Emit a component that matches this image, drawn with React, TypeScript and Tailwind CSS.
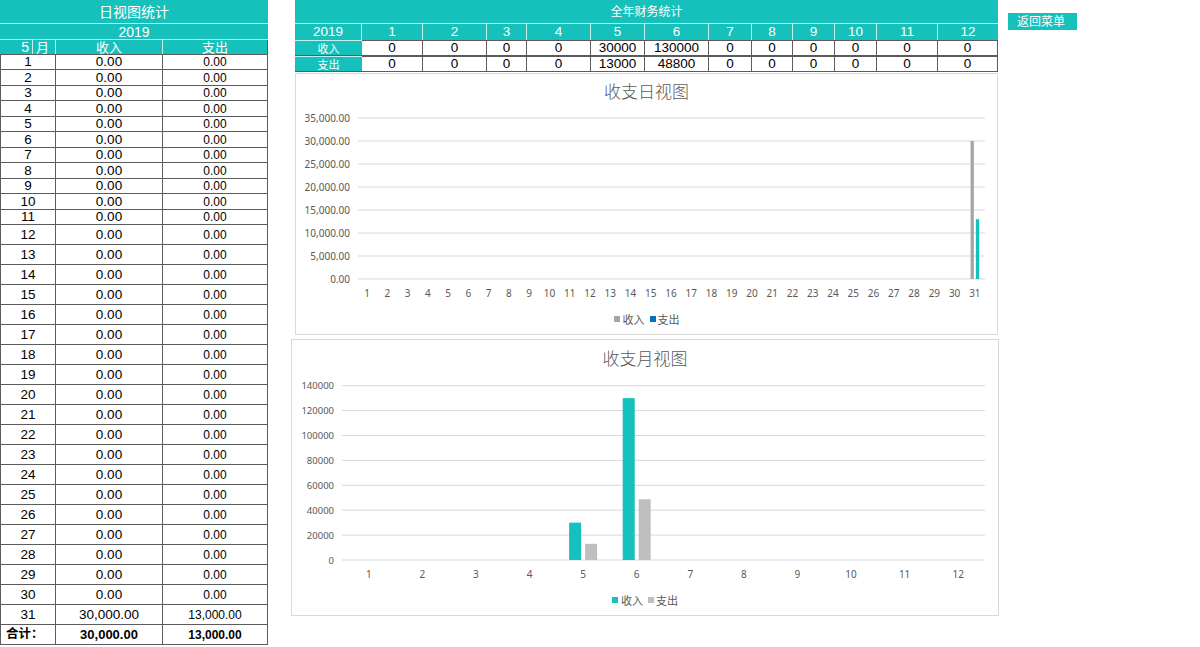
import React from "react";

const TEAL = "#17c1bb";
const NUM = "font-['Liberation_Sans','Noto_Sans_CJK_SC',sans-serif]";

function LeftTable() {
  const days = Array.from({ length: 31 }, (_, i) => i + 1);
  const cell = "flex items-center justify-center leading-none border-r border-[#5c5c5c]";
  return (
    <div className="w-[268px] shrink-0 text-black">
      <div className="h-[24px] bg-[#17c1bb] border-b border-[#c4efed] text-white text-[14px] leading-none flex items-center justify-center">
        日视图统计
      </div>
      <div className={`h-[16px] bg-[#17c1bb] border-b border-[#c4efed] text-white text-[14px] leading-none flex items-center justify-center ${NUM}`}>
        2019
      </div>
      <div className="h-[15px] bg-[#17c1bb] border-b border-[#5c5c5c] text-white text-[13px] leading-none grid grid-cols-[33px_23px_107px_105px]">
        <div className={`flex items-center justify-end pr-[3px] border-r border-[#c4efed] ${NUM} text-[14px]`}>5</div>
        <div className="flex items-center justify-start pl-[3px] border-r border-[#c4efed]">月</div>
        <div className="flex items-center justify-center border-r border-[#c4efed]">收入</div>
        <div className="flex items-center justify-center border-r border-[#5c5c5c]">支出</div>
      </div>
      <div className={NUM}>
        {days.map((d, i) => {
          const small = d <= 11;
          const h = small ? (i % 2 === 0 ? "h-[15px]" : "h-[16px]") : "h-[20px]";
          const inc = d === 31 ? "30,000.00" : "0.00";
          const exp = d === 31 ? "13,000.00" : "0.00";
          return (
            <div key={d} className={`${h} grid grid-cols-[55px_107px_105px] border-l border-b border-[#5c5c5c]`}>
              <div className={`${cell} text-[13.5px]`}>{d}</div>
              <div className={`${cell} text-[13.5px]`}>{inc}</div>
              <div className={`${cell} text-[12px]`}>{exp}</div>
            </div>
          );
        })}
        <div className="h-[20px] grid grid-cols-[55px_107px_105px] border-l border-b border-[#5c5c5c] font-bold">
          <div className="flex items-center justify-start leading-none pl-[5px] text-[12.5px] border-r border-[#5c5c5c]">合计：</div>
          <div className={`${cell} text-[13px]`}>30,000.00</div>
          <div className={`${cell} text-[12px]`}>13,000.00</div>
        </div>
      </div>
    </div>
  );
}

function TopTable() {
  const inc = [0, 0, 0, 0, 30000, 130000, 0, 0, 0, 0, 0, 0];
  const exp = [0, 0, 0, 0, 13000, 48800, 0, 0, 0, 0, 0, 0];
  const grid =
    "grid grid-cols-[67px_61px_64px_40px_64px_54px_64px_43px_41px_42px_42px_61px_60px]";
  return (
    <div className="w-[703px]">
      <div className="h-[24px] bg-[#17c1bb] border-b border-[#c4efed] text-white text-[12px] leading-none flex items-center justify-center">
        全年财务统计
      </div>
      <div className={`${grid} h-[16px] bg-[#17c1bb] text-white text-[13.5px] leading-none ${NUM}`}>
        <div className="flex items-center justify-center border-r border-[#c4efed]">2019</div>
        {Array.from({ length: 12 }, (_, i) => (
          <div key={i} className={`flex items-center justify-center ${i < 11 ? "border-r border-[#c4efed]" : ""}`}>
            {i + 1}
          </div>
        ))}
      </div>
      {[
        ["收入", inc],
        ["支出", exp],
      ].map(([label, vals]) => (
        <div key={label as string} className={`${grid} h-[16px] leading-none border-b border-[#5c5c5c]`}>
          <div className="flex items-center justify-center bg-[#17c1bb] text-white text-[11px] border-t border-[#c4efed]">{label as string}</div>
          {(vals as number[]).map((v, i) => (
            <div key={i} className={`flex items-center justify-center text-[13.5px] text-black border-r border-t border-[#5c5c5c] bg-white ${NUM}`}>
              {v}
            </div>
          ))}
        </div>
      ))}
    </div>
  );
}

function Legend({ a, b, ca, cb }: { a: string; b: string; ca: string; cb: string }) {
  return (
    <div className="h-[20px] flex items-center justify-center text-[11px] text-[#595959] leading-none">
      <span className="w-[6px] h-[6px] inline-block" style={{ background: ca }} />
      <span className="ml-[3px]">{a}</span>
      <span className="ml-[5px] w-[6px] h-[6px] inline-block" style={{ background: cb }} />
      <span className="ml-[2px]">{b}</span>
    </div>
  );
}

function DayChart() {
  const ticks = ["35,000.00", "30,000.00", "25,000.00", "20,000.00", "15,000.00", "10,000.00", "5,000.00", "0.00"];
  const x0 = 61;
  const cw = (689 - 61) / 31;
  const base = 175;
  const scale = 161 / 35000;
  const c = x0 + cw * 30.5;
  return (
    <div className="w-[703px] h-[262px] mt-[1px] border border-[#d9d9d9] bg-white">
      <div className="mt-[6px] h-[24px] leading-[24px] text-center text-[17px] font-light text-[#595959]">收支日视图</div>
      <svg width="701" height="200" className="block">
        {ticks.map((t, i) => (
          <g key={t}>
            <line x1={62} x2={689} y1={14 + 23 * i} y2={14 + 23 * i} stroke="#d9d9d9" strokeWidth={1} />
            <text x={54} y={14 + 23 * i} textAnchor="end" dominantBaseline="central" fontSize={10} fill="#595959" fontFamily="Noto Sans, sans-serif">
              {t}
            </text>
          </g>
        ))}
        {Array.from({ length: 31 }, (_, i) => (
          <text key={i} x={x0 + cw * (i + 0.5)} y={189} textAnchor="middle" dominantBaseline="central" fontSize={10} fill="#595959" fontFamily="Noto Sans, sans-serif">
            {i + 1}
          </text>
        ))}
        <rect x={c - 4.3} width={3.3} y={base - 30000 * scale} height={30000 * scale} fill="#a5a5a5" />
        <rect x={c + 1} width={3.3} y={base - 13000 * scale} height={13000 * scale} fill={TEAL} />
      </svg>
      <div className="mt-[5px]">
        <Legend a="收入" b="支出" ca="#a5a5a5" cb="#0070c0" />
      </div>
    </div>
  );
}

function MonthChart() {
  const ticks = ["140000", "120000", "100000", "80000", "60000", "40000", "20000", "0"];
  const x0 = 50;
  const cw = (693 - 50) / 12;
  const base = 189;
  const step = (189 - 14.7) / 7;
  const scale = (189 - 14.7) / 140000;
  const inc = [0, 0, 0, 0, 30000, 130000, 0, 0, 0, 0, 0, 0];
  const exp = [0, 0, 0, 0, 13000, 48800, 0, 0, 0, 0, 0, 0];
  return (
    <div className="w-[708px] h-[277px] ml-[-4px] mt-[4px] border border-[#d9d9d9] bg-white">
      <div className="mt-[7px] h-[24px] leading-[24px] text-center text-[17px] font-light text-[#595959]">收支月视图</div>
      <svg width="706" height="215" className="block">
        {ticks.map((t, i) => (
          <g key={t}>
            <line x1={50} x2={693} y1={14.7 + step * i} y2={14.7 + step * i} stroke="#d9d9d9" strokeWidth={1} />
            <text x={42} y={14.7 + step * i} textAnchor="end" dominantBaseline="central" fontSize={9.5} fill="#595959" fontFamily="Noto Sans, sans-serif">
              {t}
            </text>
          </g>
        ))}
        {Array.from({ length: 12 }, (_, i) => {
          const c = x0 + cw * (i + 0.5);
          return (
            <g key={i}>
              <text x={c} y={203} textAnchor="middle" dominantBaseline="central" fontSize={10} fill="#595959" fontFamily="Noto Sans, sans-serif">
                {i + 1}
              </text>
              {inc[i] > 0 && <rect x={c - 14} width={12} y={base - inc[i] * scale} height={inc[i] * scale} fill={TEAL} />}
              {exp[i] > 0 && <rect x={c + 2} width={12} y={base - exp[i] * scale} height={exp[i] * scale} fill="#bfbfbf" />}
            </g>
          );
        })}
      </svg>
      <div className="mt-[4px]">
        <Legend a="收入" b="支出" ca={TEAL} cb="#bfbfbf" />
      </div>
    </div>
  );
}

export default function App() {
  return (
    <div className="w-[1200px] h-[647px] bg-white overflow-hidden flex font-['Noto_Sans','Noto_Sans_CJK_SC',sans-serif]">
      <LeftTable />
      <div className="ml-[27px] w-[703px] shrink-0 flex flex-col">
        <TopTable />
        <DayChart />
        <MonthChart />
      </div>
      <div className="ml-[10px] mt-[13px] w-[69px] h-[17px] bg-[#17c1bb] text-white text-[12px] leading-none flex items-center pl-[9px] shrink-0">
        返回菜单
      </div>
    </div>
  );
}
